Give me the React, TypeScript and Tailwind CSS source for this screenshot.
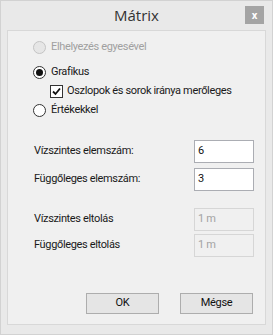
const font = { fontFamily: 'Roboto, "Liberation Sans", sans-serif' };

const Radio = ({ checked, disabled }: { checked?: boolean; disabled?: boolean }) => (
  <span
    className={`flex h-[13px] w-[13px] items-center justify-center rounded-full border ${
      disabled ? 'border-[#c4c4c4] bg-[#e6e6e6]' : 'border-[#333] bg-white'
    }`}
  >
    {checked && <span className="h-[7px] w-[7px] rounded-full bg-[#111]" />}
  </span>
);

const Checkbox = () => (
  <span className="flex h-[13px] w-[13px] items-center justify-center border border-[#333] bg-white">
    <svg width="9" height="9" viewBox="0 0 9 9">
      <path d="M1 4.5 L3.5 7 L8 1.5" fill="none" stroke="#111" strokeWidth="1.8" />
    </svg>
  </span>
);

const Field = ({ label, value, disabled }: { label: string; value: string; disabled?: boolean }) => (
  <div className="flex h-[23px] items-center justify-between pl-[26px] pr-[11px]">
    <span className="text-[#1a1a1a]">{label}</span>
    <div
      className={`flex h-full w-[60px] items-center border pl-[3px] ${
        disabled ? 'border-[#d6d6d6] bg-[#f0f0f0] text-[#a3a3a3]' : 'border-[#abadb3] bg-white text-[#111]'
      }`}
    >
      {value}
    </div>
  </div>
);

export default function App() {
  return (
    <div className="flex h-[335px] w-[273px] flex-col border border-[#d2d2d2] bg-[#e9e9e9] px-[6px] pb-[9px]" style={font}>
      <div className="relative flex h-[29px] shrink-0 items-center justify-center">
        <span className="text-[15px] text-[#333]" style={{ fontFamily: '"Open Sans", sans-serif' }}>
          Mátrix
        </span>
        <span className="absolute right-[2px] top-[5px] flex h-[18px] w-[19px] items-center justify-center bg-[#a4a4a4] text-[11px] font-bold leading-none text-white">
          x
        </span>
      </div>
      <div className="flex flex-1 flex-col border border-[#d8d8d8] bg-[#f0f0f0] text-[11px] tracking-[-0.35px]">
        <div className="flex flex-col pl-[25px] pt-[7px]">
          <div className="flex h-[19px] items-center gap-[5px] text-[#a0a0a0]">
            <Radio disabled />
            <span>Elhelyezés egyesével</span>
          </div>
          <div className="mt-[6px] flex h-[19px] items-center gap-[5px] text-[#1a1a1a]">
            <Radio checked />
            <span>Grafikus</span>
          </div>
          <div className="flex h-[19px] items-center gap-[4px] pl-[17px] text-[#1a1a1a]">
            <Checkbox />
            <span>Oszlopok és sorok iránya merőleges</span>
          </div>
          <div className="flex h-[19px] items-center gap-[5px] text-[#1a1a1a]">
            <Radio />
            <span>Értékekkel</span>
          </div>
        </div>
        <div className="mt-[20px] flex flex-col gap-[5px]">
          <Field label="Vízszintes elemszám:" value="6" />
          <Field label="Függőleges elemszám:" value="3" />
        </div>
        <div className="mt-[17px] flex flex-col gap-[3px]">
          <Field label="Vízszintes eltolás" value="1 m" disabled />
          <Field label="Függőleges eltolás" value="1 m" disabled />
        </div>
        <div className="mt-auto mb-[10px] flex justify-end gap-[21px] pr-[12px]">
          <button className="h-[21px] w-[73px] border border-[#adadad] bg-[#e5e5e5] text-[#111]">OK</button>
          <button className="h-[21px] w-[73px] border border-[#adadad] bg-[#e5e5e5] text-[#111]">Mégse</button>
        </div>
      </div>
    </div>
  );
}
